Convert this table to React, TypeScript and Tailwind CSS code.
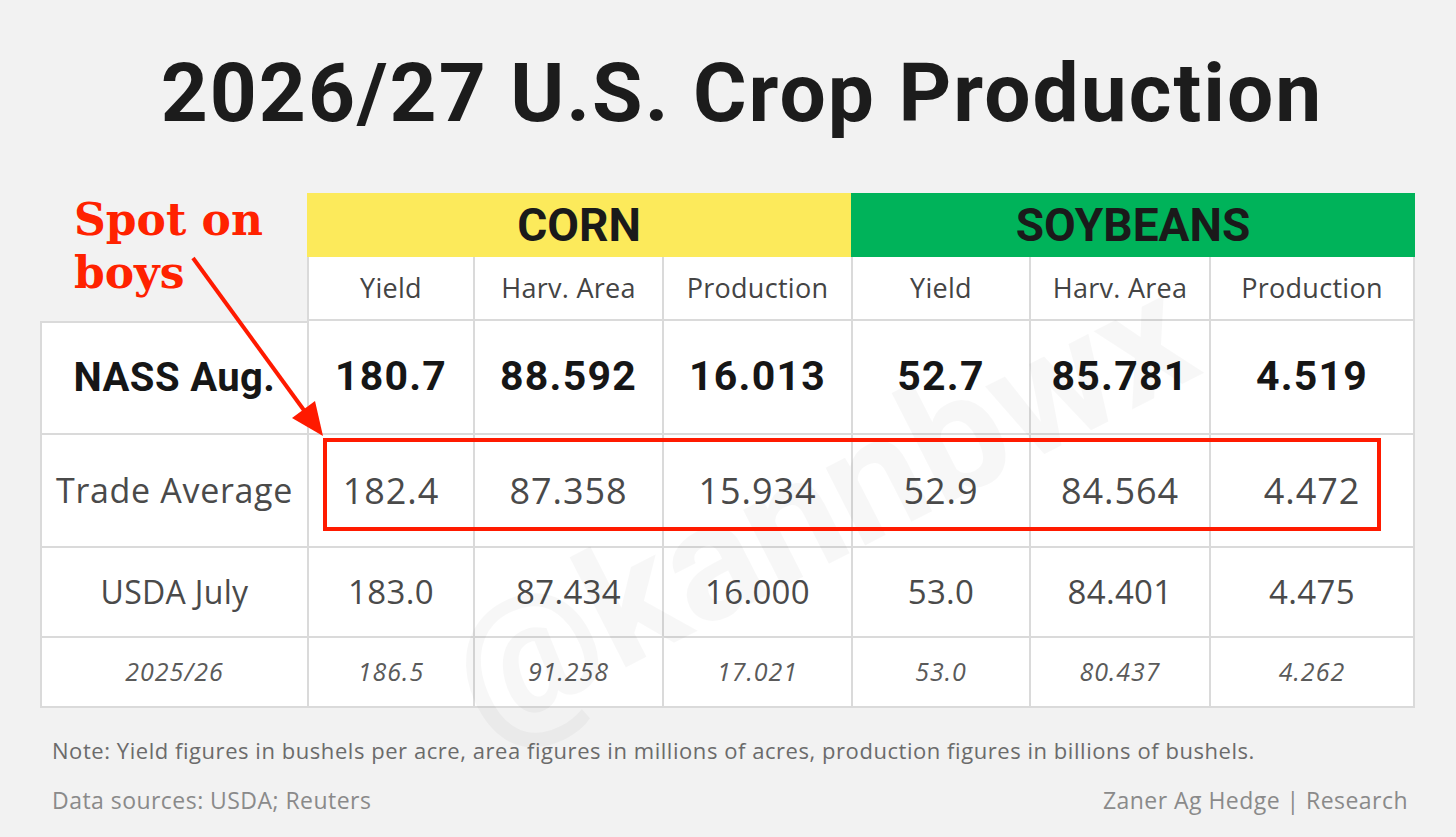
import React from "react";

type Row = {
    label: string;
    labelText: string;
    values: string[];
    height: string;
    text: string;
};

const rows: Row[] = [
    {
        label: "NASS Aug.",
        labelText: "text-[40px] tracking-[0.01em]",
        values: ["180.7", "88.592", "16.013", "52.7", "85.781", "4.519"],
        height: "h-[114px]",
        text: "font-['Roboto',sans-serif] text-[41px] tracking-[0.03em] font-bold text-[#161616]",
    },
    {
        label: "Trade Average",
        labelText: "text-[34px] tracking-[0.02em]",
        values: ["182.4", "87.358", "15.934", "52.9", "84.564", "4.472"],
        height: "h-[113px]",
        text: "text-[36px] tracking-[0.025em] text-[#4a4a4a]",
    },
    {
        label: "USDA July",
        labelText: "text-[32px] tracking-[0.01em]",
        values: ["183.0", "87.434", "16.000", "53.0", "84.401", "4.475"],
        height: "h-[90px]",
        text: "text-[33px] tracking-[0.01em] text-[#4a4a4a]",
    },
    {
        label: "2025/26",
        labelText: "text-[25px] tracking-[0.04em]",
        values: ["186.5", "91.258", "17.021", "53.0", "80.437", "4.262"],
        height: "h-[70px]",
        text: "text-[25px] tracking-[0.04em] italic text-[#5a5a5a]",
    },
];

const subHeaders = ["Yield", "Harv. Area", "Production", "Yield", "Harv. Area", "Production"];

export default function App() {
    return (
        <div className="relative w-full h-[837px] overflow-hidden bg-[#f2f2f2] font-['Open_Sans',sans-serif]">
            <h1 className="mt-[52px] pl-[28px] text-center font-['Roboto',sans-serif] text-[82px] leading-none font-bold tracking-[0.025em] text-[#1c1c1c]">
                2026/27 U.S. Crop Production
            </h1>

            <div className="mt-[59px] ml-[40px] grid w-[1375px] grid-cols-[267px_166px_189px_189px_178px_180px_206px]">
                {/* crop headers */}
                <div className="h-[64px]" />
                <div className="col-span-3 flex h-[64px] items-center justify-center bg-[#fcea5b] font-['Roboto',sans-serif] text-[46px] font-bold text-[#1a1a1a]">
                    CORN
                </div>
                <div className="col-span-3 flex h-[64px] items-center justify-center bg-[#00b35a] font-['Roboto',sans-serif] text-[46px] font-bold text-[#1a1a1a]">
                    SOYBEANS
                </div>

                {/* column headers */}
                <div className="h-[64px]" />
                {subHeaders.map((h, i) => (
                    <div
                        key={i}
                        className={`flex h-[64px] items-center justify-center border-l-2 border-b-2 border-[#dadada] bg-white text-[27px] tracking-[0.01em] text-[#444] ${i === 5 ? "border-r-2" : ""}`}
                    >
                        {h}
                    </div>
                ))}

                {/* data rows */}
                {rows.map((row, r) => (
                    <React.Fragment key={row.label}>
                        <div
                            className={`flex ${row.height} items-center justify-center border-l-2 border-b-2 border-[#dadada] bg-white ${r === 0 ? "border-t-2" : ""} ${row.text}`}
                        >
                            <span className={row.labelText}>{row.label}</span>
                        </div>
                        {row.values.map((v, i) => (
                            <div
                                key={i}
                                className={`flex ${row.height} items-center justify-center border-l-2 border-b-2 border-[#dadada] bg-white ${i === 5 ? "border-r-2" : ""} ${row.text}`}
                            >
                                {v}
                            </div>
                        ))}
                    </React.Fragment>
                ))}
            </div>

            <div className="mt-[29px] pl-[52px] text-[22px] leading-[26px] tracking-[0.025em] text-[#6b6b6b]">
                Note: Yield figures in bushels per acre, area figures in millions of acres, production figures in billions of bushels.
            </div>
            <div className="mt-[23px] flex justify-between pl-[52px] pr-[48px] text-[23px] leading-[28px] tracking-[0.02em] text-[#8a8a8a]">
                <span>Data sources: USDA; Reuters</span>
                <span>Zaner Ag Hedge | Research</span>
            </div>

            {/* watermark */}
            <div className="pointer-events-none absolute left-[820px] top-[505px] -translate-x-1/2 -translate-y-1/2 -rotate-[27deg] whitespace-nowrap font-['Roboto',sans-serif] text-[165px] font-bold leading-none text-black/[0.03]">
                @kannbwx
            </div>

            {/* annotation */}
            <div className="pointer-events-none absolute left-[74px] top-[193px] font-['DejaVu_Serif',serif] text-[44px] font-bold leading-[53px] text-[#ff2200]">
                Spot on
                <br />
                boys
            </div>
            <svg className="pointer-events-none absolute inset-0 h-full w-full" viewBox="0 0 1456 837">
                <rect x="325" y="440" width="1054" height="89" fill="none" stroke="#ff1a00" strokeWidth="4" />
                <line x1="193" y1="258" x2="306" y2="413" stroke="#ff1a00" strokeWidth="4" />
                <polygon points="323,436 292,418 315,401" fill="#ff1a00" />
            </svg>
        </div>
    );
}
